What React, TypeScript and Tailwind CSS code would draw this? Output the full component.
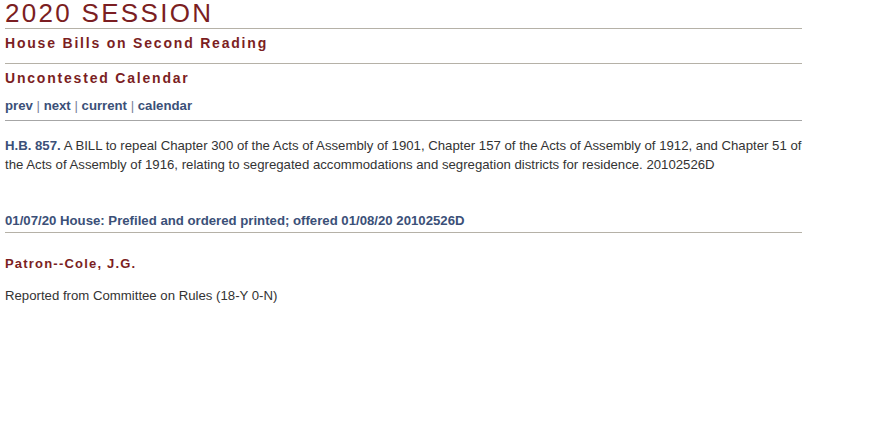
export default function App() {
  return (
    <div className="min-h-screen bg-white font-['Liberation_Sans',Arial,sans-serif] text-[#333333]">
      <div className="w-[797px] pl-[5px] box-content">
        <h1 className="-mt-[2px] text-[26px] leading-[30px] tracking-[2.3px] text-[#7b1e22]">2020 SESSION</h1>
        <div className="border-t border-[#b5b1a7]" />
        <h2 className="pt-[6px] pb-[12px] text-[14px] leading-[16px] font-bold tracking-[1.8px] text-[#7b1e22]">
          House Bills on Second Reading
        </h2>
        <div className="border-t border-[#b5b1a7]" />
        <h3 className="pt-[6px] text-[14px] leading-[16px] font-bold tracking-[1.8px] text-[#7b1e22]">
          Uncontested Calendar
        </h3>
        <p className="pt-[12px] pb-[6px] text-[13.2px] leading-[16px] font-bold text-[#3b5078]">
          <a href="#">prev</a> <span className="font-normal text-[#7a8499]">|</span> <a href="#">next</a>{" "}
          <span className="font-normal text-[#7a8499]">|</span> <a href="#">current</a>{" "}
          <span className="font-normal text-[#7a8499]">|</span> <a href="#">calendar</a>
        </p>
        <div className="border-t border-[#a6a6a6]" />
        <p className="pt-[15px] text-[13.2px] leading-[19px]">
          <b className="text-[#3b5078]">H.B. 857.</b> A BILL to repeal Chapter 300 of the Acts of Assembly of 1901,
          Chapter 157 of the Acts of Assembly of 1912, and Chapter 51 of the Acts of Assembly of 1916, relating to
          segregated accommodations and segregation districts for residence. 20102526D
        </p>
        <p className="pt-[39px] pb-[3px] text-[13.2px] leading-[16px] font-bold text-[#3b5078]">
          01/07/20 House: Prefiled and ordered printed; offered 01/08/20 20102526D
        </p>
        <div className="border-t border-[#b5b1a7]" />
        <p className="pt-[23px] text-[13px] leading-[16px] font-bold tracking-[1.2px] text-[#7b1e22]">
          Patron--Cole, J.G.
        </p>
        <p className="pt-[16px] text-[13.2px] leading-[16px]">Reported from Committee on Rules (18-Y 0-N)</p>
      </div>
    </div>
  );
}
